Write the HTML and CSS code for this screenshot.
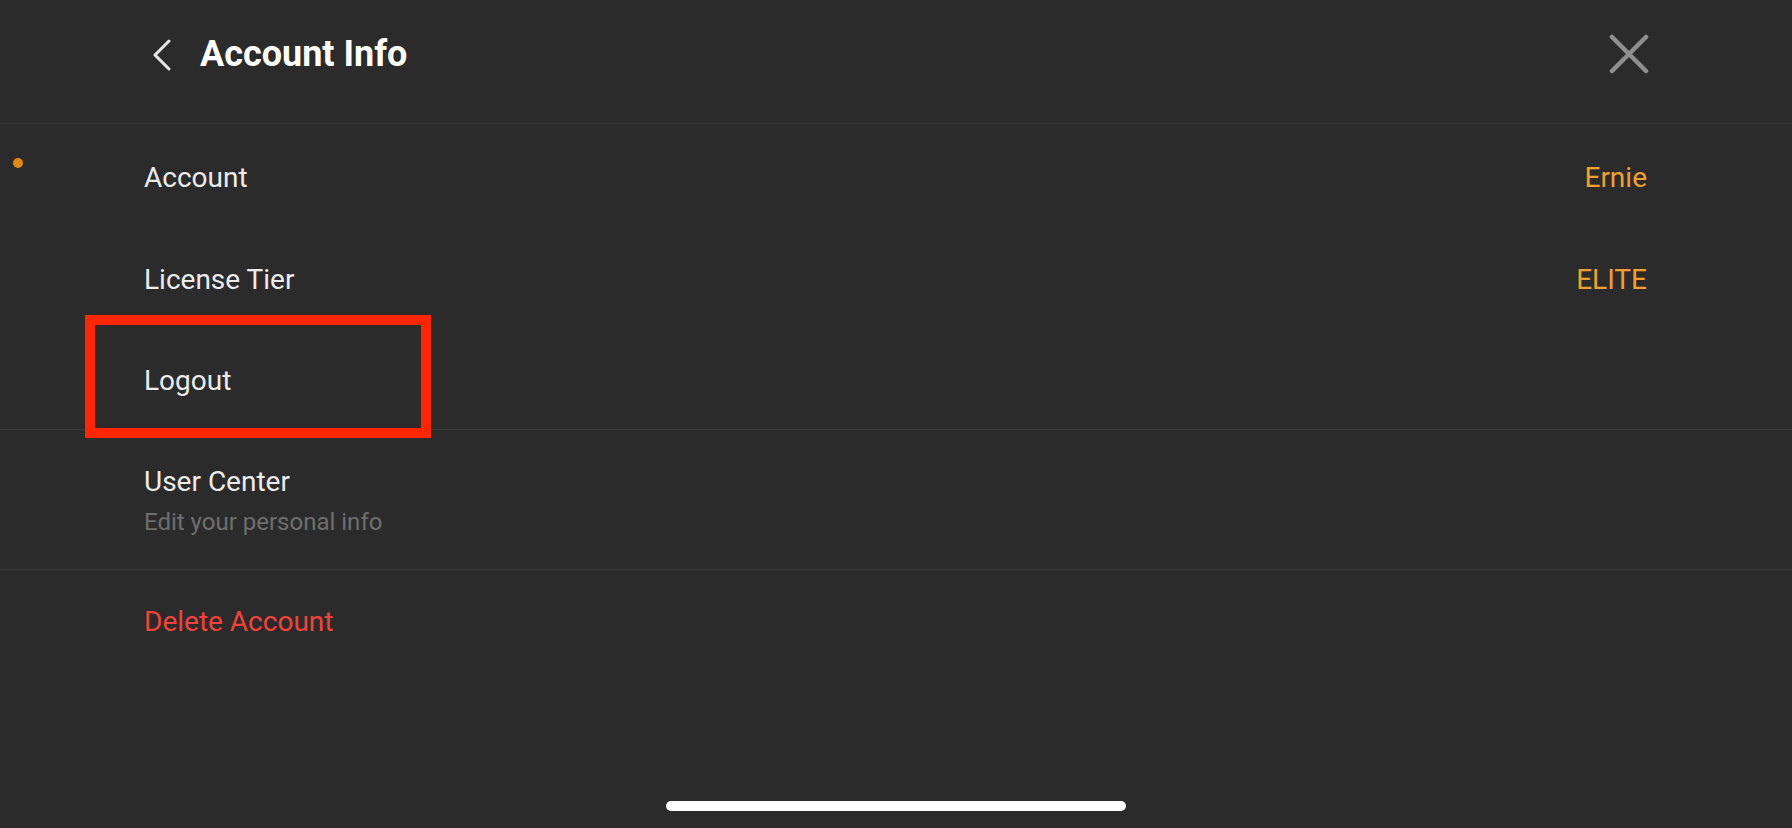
FILE: index.html
```html
<!DOCTYPE html>
<html lang="en">
<head>
    <meta charset="UTF-8">
    <meta name="viewport" content="width=device-width, initial-scale=1.0">
    <title>Account Info</title>
    <link rel="stylesheet" href="styles.css">
</head>
<body>
    <div class="screen">
        <!-- top bar -->
        <div class="header">
            <div class="back">
                <svg width="20" height="32" viewBox="0 0 20 32">
                    <path d="M17 2 L3 16 L17 30" fill="none" stroke="#e6e6e6" stroke-width="3" stroke-linecap="round" stroke-linejoin="round"/>
                </svg>
            </div>
            <h1>Account Info</h1>
            <div class="close">
                <svg width="40" height="40" viewBox="0 0 40 40">
                    <path d="M3 3 L37 37 M37 3 L3 37" fill="none" stroke="#8f8f8f" stroke-width="4.5" stroke-linecap="round"/>
                </svg>
            </div>
        </div>

        <span class="dot"></span>

        <div class="group">
            <div class="row">
                <span class="label">Account</span>
                <span class="value">Ernie</span>
            </div>
            <div class="row">
                <span class="label">License Tier</span>
                <span class="value">ELITE</span>
            </div>
            <div class="row">
                <span class="label">Logout</span>
            </div>
        </div>

        <div class="group center">
            <div class="label">User Center</div>
            <div class="sub">Edit your personal info</div>
        </div>

        <div class="row danger">
            <span class="label">Delete Account</span>
        </div>

        <div class="home-bar"></div>
    </div>

    <!-- highlight around logout -->
    <div class="highlight"></div>
</body>
</html>
```

FILE: styles.css
```css
body {
    margin: 0;
    background-color: #2b2b2b;
    font-family: Roboto, "Liberation Sans", sans-serif;
    color: #ececec;
}
.screen {
    height: 828px;
    display: flex;
    flex-direction: column;
    position: relative;
}
.header {
    height: 107px;
    display: flex;
    align-items: center;
    padding: 0 145px 16px 152px;
    border-bottom: 1px solid #3a3a3a;
}
.back {
    width: 20px;
    height: 32px;
    margin-right: 28px;
    margin-top: 2px;
}
.back svg, .close svg {
    display: block;
}
h1 {
    margin: 0;
    font-size: 36px;
    font-weight: 700;
    color: #ffffff;
    flex: 1;
}
.close {
    width: 40px;
    height: 40px;
    margin-right: -2px;
}
.dot {
    position: absolute;
    left: 13px;
    top: 158px;
    width: 10px;
    height: 10px;
    border-radius: 50%;
    background-color: #e08a12;
}
.group {
    border-bottom: 1px solid #3a3a3a;
}
.row {
    height: 95.5px;
    display: flex;
    align-items: center;
    justify-content: space-between;
    padding: 6px 145px 0 144px;
    font-size: 28px;
}
.value {
    color: #f0a02c;
}
.center {
    height: 104px;
    padding: 35px 145px 0 144px;
    display: flex;
    flex-direction: column;
    font-size: 28px;
}
.center .label {
    line-height: 34px;
}
.sub {
    font-size: 24px;
    color: #6e6e6e;
    line-height: 30px;
    margin-top: 8px;
}
.danger {
    height: 104px;
    padding-top: 0;
    color: #f2433a;
}
.home-bar {
    width: 460px;
    height: 10px;
    border-radius: 5px;
    background-color: #ffffff;
    margin: auto auto 17px;
}
.highlight {
    position: absolute;
    left: 85px;
    top: 315px;
    width: 326px;
    height: 103px;
    border: 10px solid #ff2600;
}
```
